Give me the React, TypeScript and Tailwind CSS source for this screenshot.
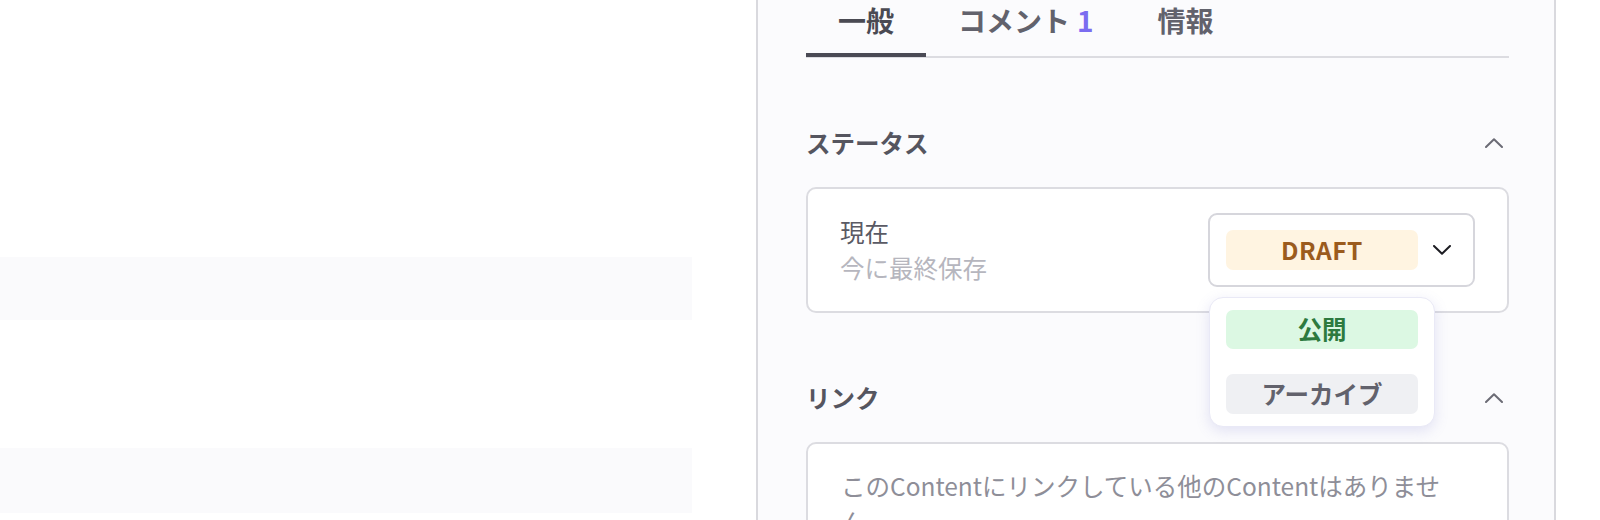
import React from "react";

function ChevronUp() {
  return (
    <svg width="18" height="10" viewBox="0 0 18 10" fill="none" className="mr-[6px]">
      <path d="M1 9 L9 1.2 L17 9" stroke="#6b6b75" strokeWidth="2" strokeLinecap="round" strokeLinejoin="round" />
    </svg>
  );
}

function ChevronDown() {
  return (
    <svg width="18" height="10" viewBox="0 0 18 10" fill="none">
      <path d="M1 1 L9 8.8 L17 1" stroke="#1c1c22" strokeWidth="2" strokeLinecap="round" strokeLinejoin="round" />
    </svg>
  );
}

export default function App() {
  return (
    <div className="flex h-[520px] w-full overflow-hidden bg-white font-['Noto_Sans_CJK_JP','Noto_Sans',sans-serif]">
      {/* left content area */}
      <div className="w-[756px] shrink-0 flex flex-col pt-[257px]">
        <div className="w-[692px] h-[63px] bg-[#fafafc]" />
        <div className="w-[692px] h-[65px] mt-[128px] bg-[#fafafc]" />
      </div>

      {/* sidebar */}
      <div className="w-[800px] shrink-0 border-x-2 border-[#d9d9de] bg-[#fbfbfd] pl-[48px] pr-[45px]">
        {/* tabs */}
        <div className="flex border-b-2 border-[#dcdce1]">
          <div className="relative px-8 pb-[16px] leading-[40px] text-[28px] font-bold text-[#4a4a53]">
            一般
            <div className="absolute left-0 right-0 bottom-[-1px] h-[4px] bg-[#4a4a55]" />
          </div>
          <div className="px-8 pb-[16px] leading-[40px] text-[28px] font-bold text-[#62626c]">
            コメント<span className="ml-[7px] text-[#7b6cf0]">1</span>
          </div>
          <div className="px-8 pb-[16px] leading-[40px] text-[28px] font-bold text-[#62626c]">
            情報
          </div>
        </div>

        {/* status section */}
        <div className="mt-[67px] flex items-center justify-between">
          <div className="text-[24.5px] leading-[36px] font-bold text-[#55555f]">ステータス</div>
          <ChevronUp />
        </div>
        <div className="mt-[26px] flex items-center justify-between rounded-[10px] border-2 border-[#dcdce1] bg-white px-[32px] py-[24px]">
          <div className="flex flex-col text-[24.5px] leading-[36px]">
            <span className="text-[#5a5a64]">現在</span>
            <span className="text-[#b6b6be]">今に最終保存</span>
          </div>
          <div className="relative">
            <div className="flex h-[74px] w-[267px] items-center rounded-[9px] border-2 border-[#d6d6dc] bg-white pl-[16px]">
              <div className="flex h-[40px] w-[192px] items-center justify-center rounded-[7px] bg-[#fff4e1] text-[24.5px] font-bold tracking-[0.5px] text-[#9b5b1d]">
                DRAFT
              </div>
              <div className="ml-[15px] flex items-center">
                <ChevronDown />
              </div>
            </div>
            <div className="absolute left-[1px] top-[84px] z-10 flex w-[226px] flex-col gap-[25px] rounded-[14px] border border-[#e9e9f6] bg-white px-[16px] py-[12px] shadow-[0_4px_14px_rgba(110,110,200,0.18)]">
              <div className="flex h-[39px] items-center justify-center rounded-[7px] bg-[#dcf8e3] text-[24.5px] font-bold text-[#2d7a3e]">
                公開
              </div>
              <div className="flex h-[40px] items-center justify-center rounded-[7px] bg-[#eff0f3] text-[24.5px] font-bold text-[#62626c]">
                アーカイブ
              </div>
            </div>
          </div>
        </div>

        {/* link section */}
        <div className="mt-[67px] flex items-center justify-between">
          <div className="text-[24.5px] leading-[36px] font-bold text-[#55555f]">リンク</div>
          <ChevronUp />
        </div>
        <div className="mt-[26px] rounded-[10px] border-2 border-[#dcdce1] bg-white px-[33px] py-[24px]">
          <p className="max-w-[622px] text-[24.5px] leading-[36px] text-[#8e8e98]">
            このContentにリンクしている他のContentはありません。
          </p>
        </div>
      </div>

      <div className="flex-1 bg-white" />
    </div>
  );
}
